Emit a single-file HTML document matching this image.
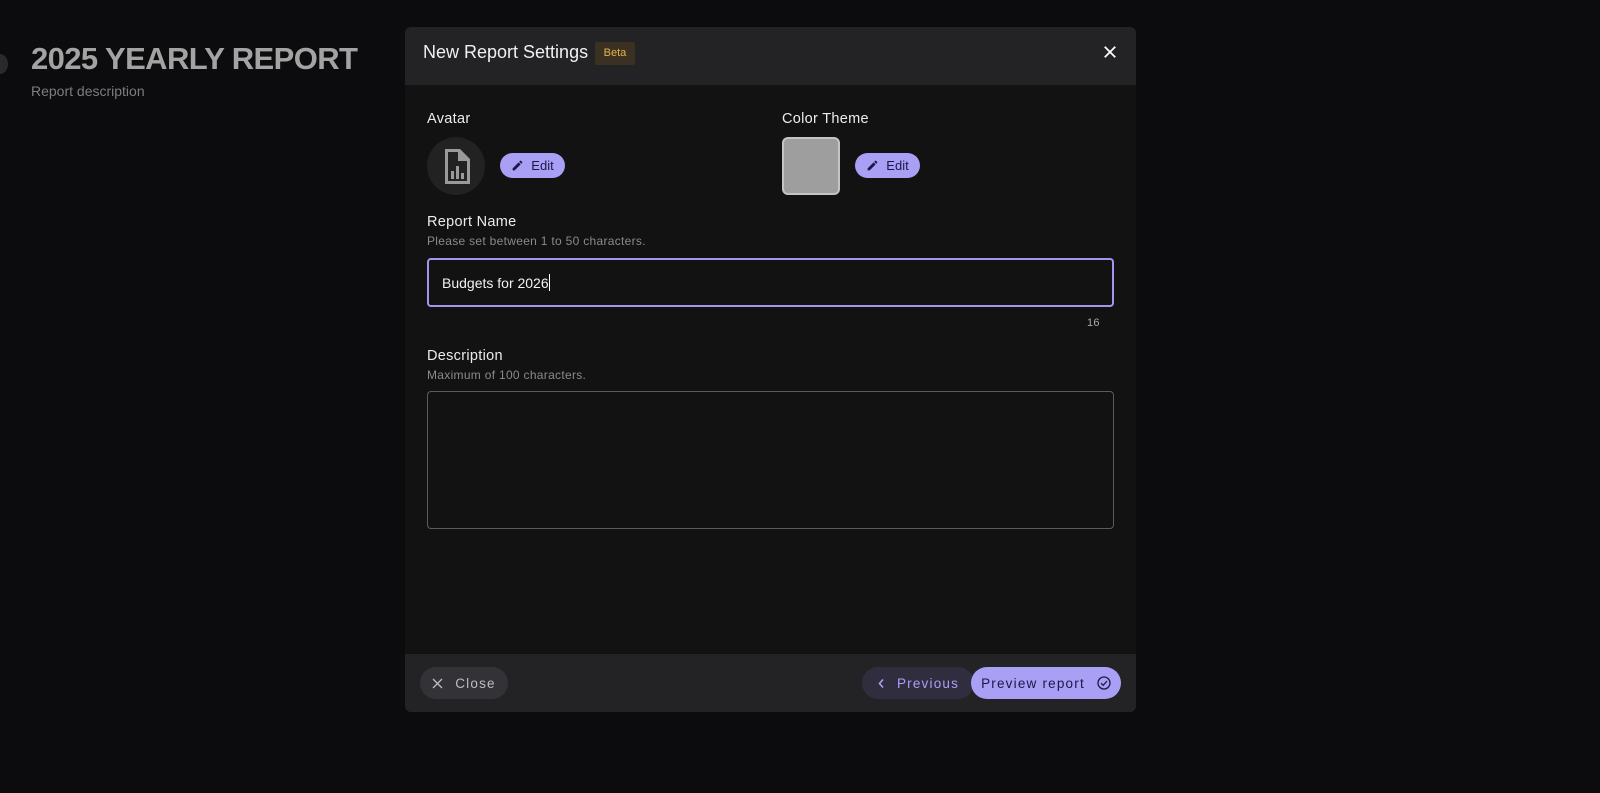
<!DOCTYPE html>
<html><head><meta charset="utf-8"><style>
*{box-sizing:border-box;margin:0;padding:0}
body{width:1600px;height:793px;background:#0c0c0e;font-family:"Liberation Sans",sans-serif;position:relative;overflow:hidden;color:#e8e8e8}
.abs{position:absolute}
.bgt{left:31px;top:41px;font-size:31px;font-weight:bold;color:#a3a3a3;letter-spacing:-0.6px}
.bgd{left:31px;top:83px;font-size:14px;color:#7d7d7d}
.dot{left:-8px;top:54px;width:16px;height:20px;border-radius:50%;background:#2a2a2c}
.dlg{left:405px;top:27px;width:731px;height:685px;background:#121212;border-radius:6px;overflow:hidden}
.hdr{left:0;top:0;width:731px;height:58px;background:#232325}
.ttl{left:18px;top:15px;font-size:18px;color:#f0f0f0}
.beta{left:190px;top:15px;width:40px;height:23px;background:#3a3122;color:#e7b24a;font-size:11px;text-align:center;line-height:23px;border-radius:2px}
.lbl{font-size:14.5px;color:#ececec;letter-spacing:.3px}
.hint{font-size:12px;color:#8a8a8a;letter-spacing:.3px}
.btn{height:25px;border-radius:13px;background:#a99ff5;color:#1d1747;font-size:13px;display:flex;align-items:center;justify-content:center;gap:7px}
.inp{left:22px;top:231px;width:687px;height:49px;border:2px solid #a196f0;border-radius:4px;font-size:14px;color:#f2f2f2;padding:14px 0 0 13px}
.ta{left:22px;top:364px;width:687px;height:138px;border:1px solid #5c5c5c;border-radius:4px}
.ftr{left:0;top:627px;width:731px;height:58px;background:#232325}
.fb{height:32px;border-radius:16px;font-size:13.5px;letter-spacing:1.2px;display:flex;align-items:center;justify-content:center;gap:12px}
</style></head><body>
<div class="abs dot"></div>
<div class="abs bgt">2025 YEARLY REPORT</div>
<div class="abs bgd">Report description</div>
<div class="abs dlg">
 <div class="abs hdr">
  <div class="abs ttl">New Report Settings</div>
  <div class="abs beta">Beta</div>
  <svg class="abs" style="left:698px;top:18px" width="14" height="14" viewBox="0 0 16 16"><path d="M2 2L14 14M14 2L2 14" stroke="#fff" stroke-width="2"/></svg>
 </div>
 <div class="abs lbl" style="left:22px;top:84px">Avatar</div>
 <div class="abs" style="left:22px;top:110px;width:58px;height:58px;border-radius:50%;background:#222"></div>
 <svg class="abs" style="left:37px;top:121px" width="29" height="37" viewBox="0 0 29 37"><path d="M3 1H18L28 11V36H3Z" fill="#9a9a9a"/><path d="M6 4H16V13H25V33H6Z" fill="#222"/><rect x="9" y="23" width="3" height="8" fill="#9a9a9a"/><rect x="14" y="18" width="3" height="13" fill="#9a9a9a"/><rect x="19" y="25" width="3" height="6" fill="#9a9a9a"/></svg>
 <div class="abs btn" style="left:95px;top:126px;width:65px"><svg width="13" height="13" viewBox="0 0 24 24"><path d="M3 17.25V21h3.75L17.8 9.94l-3.75-3.75zM20.7 7.04a1 1 0 000-1.41l-2.34-2.34a1 1 0 00-1.41 0l-1.83 1.83 3.75 3.75z" fill="#1d1747"/></svg>Edit</div>
 <div class="abs lbl" style="left:377px;top:84px">Color Theme</div>
 <div class="abs" style="left:377px;top:110px;width:58px;height:58px;border-radius:6px;background:#9e9e9e;border:2px solid #c4c4c4"></div>
 <div class="abs btn" style="left:450px;top:126px;width:65px"><svg width="13" height="13" viewBox="0 0 24 24"><path d="M3 17.25V21h3.75L17.8 9.94l-3.75-3.75zM20.7 7.04a1 1 0 000-1.41l-2.34-2.34a1 1 0 00-1.41 0l-1.83 1.83 3.75 3.75z" fill="#1d1747"/></svg>Edit</div>
 <div class="abs lbl" style="left:22px;top:187px">Report Name</div>
 <div class="abs hint" style="left:22px;top:207px">Please set between 1 to 50 characters.</div>
 <div class="abs inp">Budgets for 2026<span style="display:inline-block;width:1px;height:17px;background:#fff;vertical-align:-3px"></span></div>
 <div class="abs hint" style="left:682px;top:290px;font-size:11px;color:#aaa">16</div>
 <div class="abs lbl" style="left:22px;top:321px">Description</div>
 <div class="abs hint" style="left:22px;top:341px">Maximum of 100 characters.</div>
 <div class="abs ta"></div>
 <div class="abs ftr">
  <div class="abs fb" style="left:15px;top:13px;width:88px;background:#333236;color:#bdbdbd"><svg width="11" height="11" viewBox="0 0 11 11"><path d="M1 1L10 10M10 1L1 10" stroke="#bdbdbd" stroke-width="1.3"/></svg>Close</div>
  <div class="abs fb" style="left:457px;top:13px;width:112px;background:#302d3e;color:#a99ff5"><svg width="8" height="11" viewBox="0 0 8 11"><path d="M6 1.5L2.5 5.5L6 9.5" stroke="#a99ff5" stroke-width="1.6" fill="none"/></svg>Previous</div>
  <div class="abs fb" style="left:566px;top:13px;width:150px;background:#a99ff5;color:#1d1747">Preview report<svg width="14" height="14" viewBox="0 0 14 14"><circle cx="7" cy="7" r="6" stroke="#1d1747" stroke-width="1.3" fill="none"/><path d="M4 7.2L6.2 9.3L10 5" stroke="#1d1747" stroke-width="1.3" fill="none"/></svg></div>
 </div>
</div>
</body></html>
